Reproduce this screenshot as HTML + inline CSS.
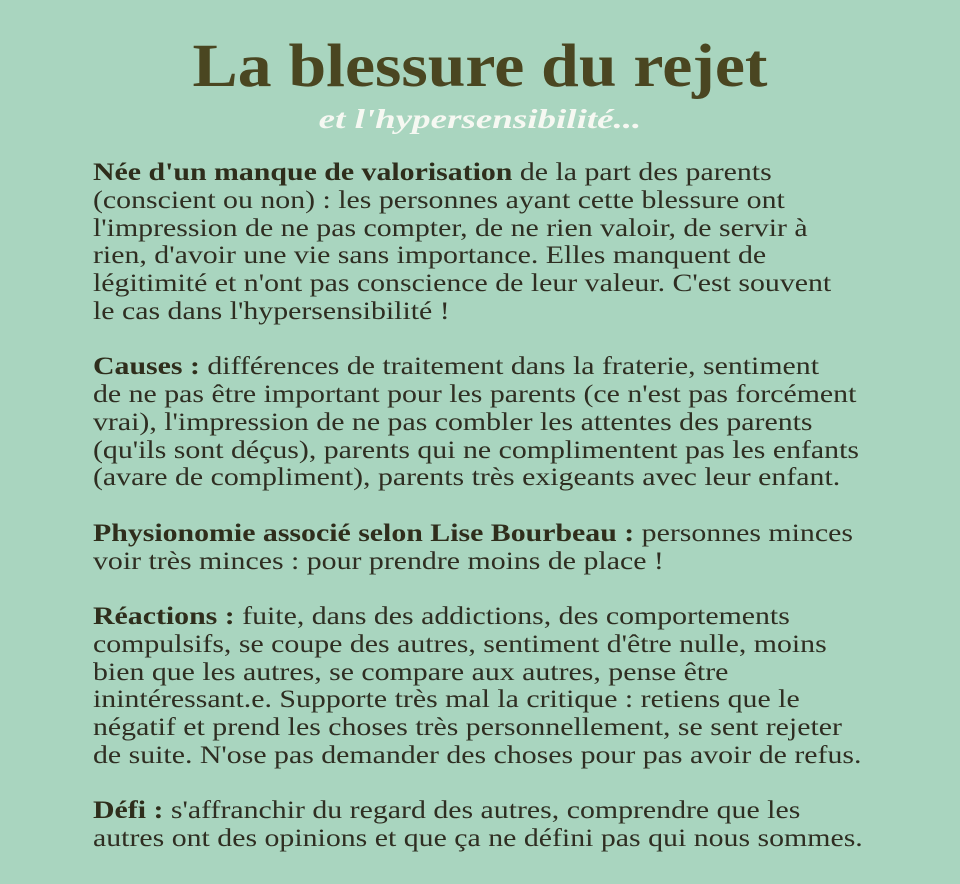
<!DOCTYPE html>
<html><head><meta charset="utf-8"><style>
html,body{margin:0;padding:0}
body{width:960px;height:884px;background:#a9d5bf;overflow:hidden;position:relative;font-family:"Liberation Serif",serif;}
h1{position:absolute;top:32px;left:0;width:960px;text-align:center;margin:0;font-size:61px;font-weight:bold;color:#4a4621;line-height:70px;transform:scaleX(1.11);transform-origin:480px 0}
.sub{position:absolute;top:104px;left:0;width:960px;text-align:center;font-size:27px;font-style:italic;font-weight:bold;color:#f6f8f2;line-height:30px;transform:scaleX(1.37);transform-origin:480px 0}
.body{position:absolute;top:158px;left:93px;font-size:25.5px;line-height:27.75px;color:#2f2e22;white-space:nowrap;transform:scaleX(1.17);transform-origin:0 0}
b{color:#2f2e1c}
</style></head><body>
<h1>La blessure du rejet</h1>
<div class="sub">et l'hypersensibilité...</div>
<div class="body">
<b>Née d'un manque de valorisation</b> de la part des parents<br>
(conscient ou non) : les personnes ayant cette blessure ont<br>
l'impression de ne pas compter, de ne rien valoir, de servir à<br>
rien, d'avoir une vie sans importance. Elles manquent de<br>
légitimité et n'ont pas conscience de leur valeur. C'est souvent<br>
le cas dans l'hypersensibilité !<br>
<br>
<b>Causes :</b> différences de traitement dans la fraterie, sentiment<br>
de ne pas être important pour les parents (ce n'est pas forcément<br>
vrai), l'impression de ne pas combler les attentes des parents<br>
(qu'ils sont déçus), parents qui ne complimentent pas les enfants<br>
(avare de compliment), parents très exigeants avec leur enfant.<br>
<br>
<b>Physionomie associé selon Lise Bourbeau :</b> personnes minces<br>
voir très minces : pour prendre moins de place !<br>
<br>
<b>Réactions :</b> fuite, dans des addictions, des comportements<br>
compulsifs, se coupe des autres, sentiment d'être nulle, moins<br>
bien que les autres, se compare aux autres, pense être<br>
inintéressant.e. Supporte très mal la critique : retiens que le<br>
négatif et prend les choses très personnellement, se sent rejeter<br>
de suite. N'ose pas demander des choses pour pas avoir de refus.<br>
<br>
<b>Défi :</b> s'affranchir du regard des autres, comprendre que les<br>
autres ont des opinions et que ça ne défini pas qui nous sommes.
</div>
</body></html>
